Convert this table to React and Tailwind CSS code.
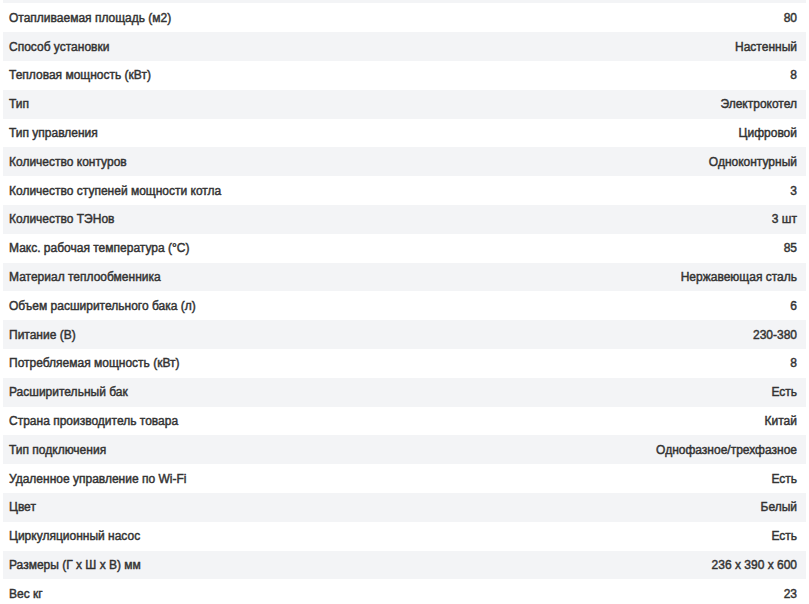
const rows = [
  ["", ""],
  ["Отапливаемая площадь (м2)", "80"],
  ["Способ установки", "Настенный"],
  ["Тепловая мощность (кВт)", "8"],
  ["Тип", "Электрокотел"],
  ["Тип управления", "Цифровой"],
  ["Количество контуров", "Одноконтурный"],
  ["Количество ступеней мощности котла", "3"],
  ["Количество ТЭНов", "3 шт"],
  ["Макс. рабочая температура (°C)", "85"],
  ["Материал теплообменника", "Нержавеющая сталь"],
  ["Объем расширительного бака (л)", "6"],
  ["Питание (В)", "230-380"],
  ["Потребляемая мощность (кВт)", "8"],
  ["Расширительный бак", "Есть"],
  ["Страна производитель товара", "Китай"],
  ["Тип подключения", "Однофазное/трехфазное"],
  ["Удаленное управление по Wi-Fi", "Есть"],
  ["Цвет", "Белый"],
  ["Циркуляционный насос", "Есть"],
  ["Размеры (Г х Ш х В) мм", "236 x 390 x 600"],
  ["Вес кг", "23"],
];

export default function App() {
  return (
    <div className="w-[809px] h-[604px] overflow-hidden bg-white">
      <div
        className="mx-[3px] -mt-[25.4px] text-[12px] text-[#333] font-normal [-webkit-text-stroke:0.45px_#333]"
        style={{ fontFamily: '"Liberation Sans", Arial, sans-serif' }}
      >
        {rows.map(([k, v], i) => (
          <div
            key={i}
            className={`flex items-center justify-between h-[28.8px] pl-[6px] pr-[9px] ${i % 2 === 0 ? "bg-[#f3f4f6]" : "bg-white"}`}
          >
            <span>{k}</span>
            <span>{v}</span>
          </div>
        ))}
      </div>
    </div>
  );
}
